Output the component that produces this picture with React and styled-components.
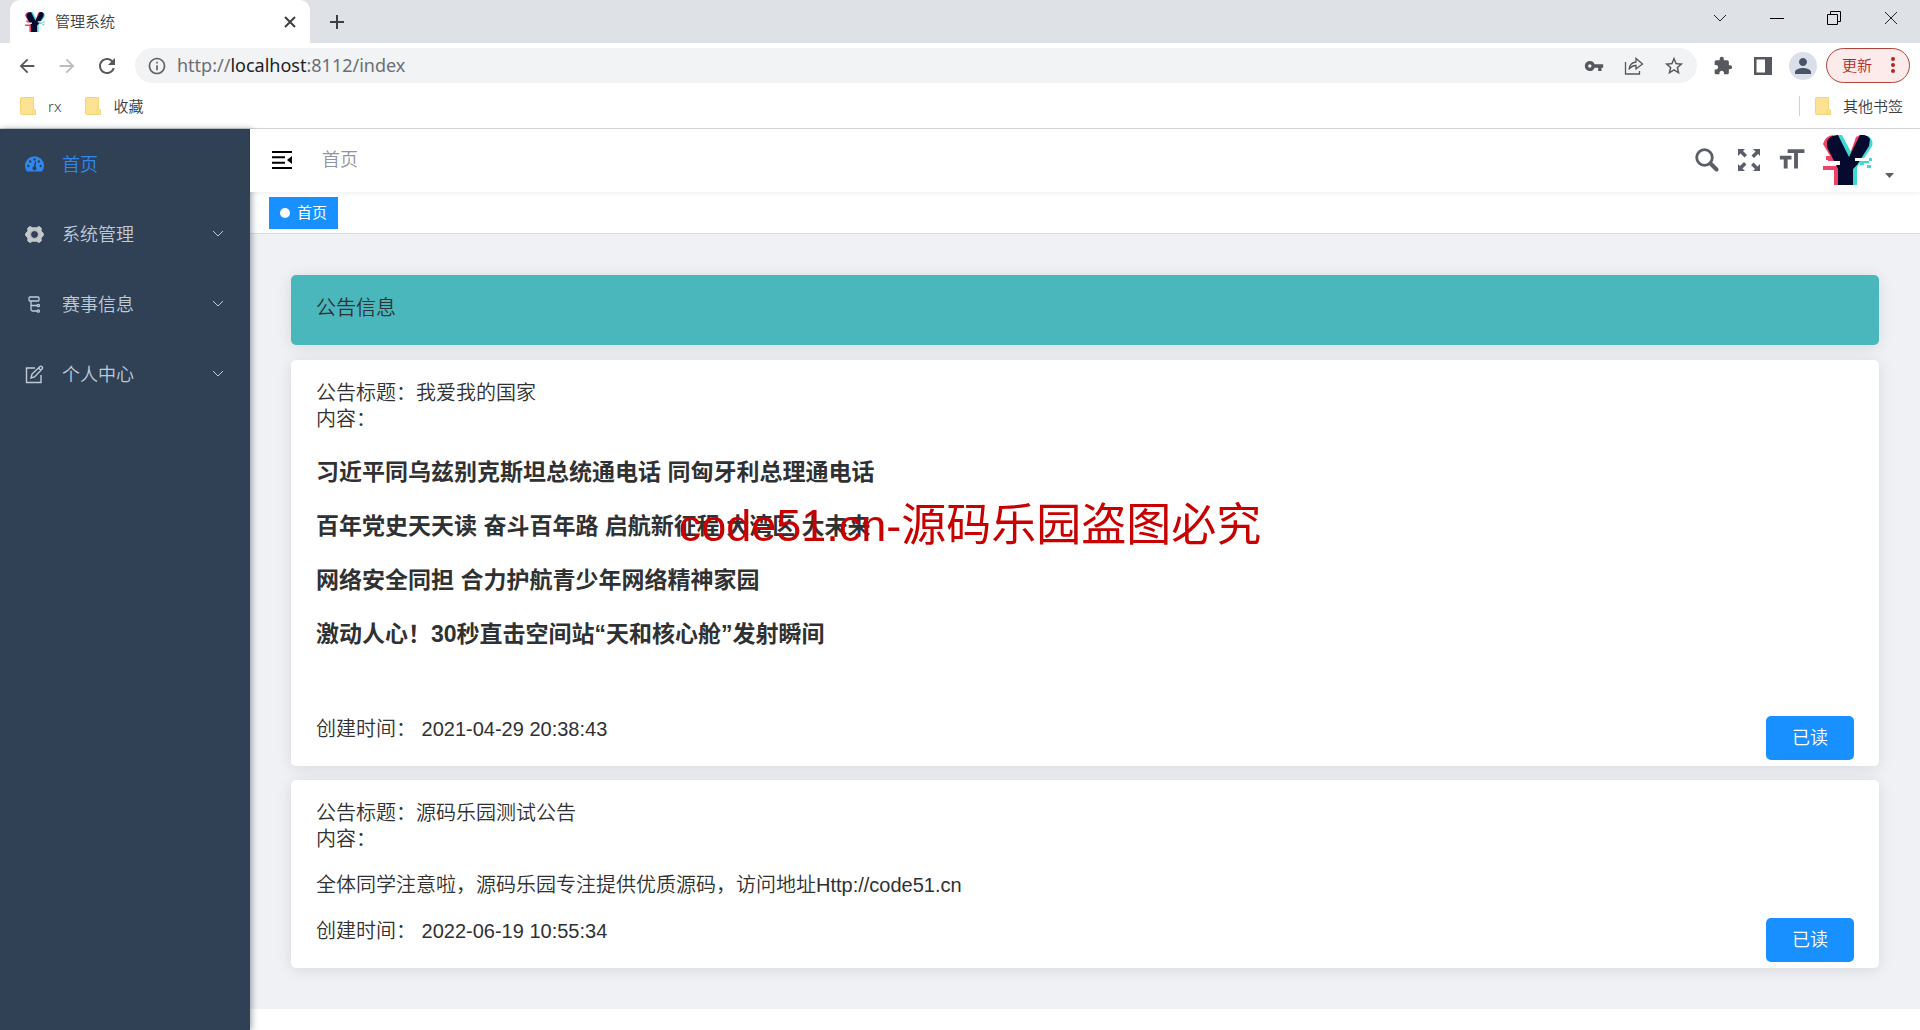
import styled, { createGlobalStyle } from "styled-components";
import {
	MdArrowBack,
	MdArrowForward,
	MdExtension,
	MdFormatSize,
	MdInfoOutline,
	MdPerson,
	MdRefresh,
	MdStarBorder,
	MdVpnKey
} from "react-icons/md";

const GlobalStyle = createGlobalStyle`
	*, *::before, *::after {
		box-sizing: border-box;
	}
	body {
		margin: 0;
		background: #fff;
		color: #303133;
		font-family: "Liberation Sans", "Noto Sans CJK SC", sans-serif;
		font-size: 20px;
		font-weight: 350;
		line-height: 26px;
	}
	button, input {
		font-family: inherit;
		font-weight: inherit;
	}
`;

const Window = styled.div`
	display: flex;
	flex-direction: column;
	min-height: 100vh;
`;

/* ---------- browser frame ---------- */

const TabStrip = styled.header`
	display: flex;
	height: 43px;
	padding-left: 10px;
	background: #dee1e6;
`;

const BrowserTab = styled.div`
	display: flex;
	align-items: center;
	width: 300px;
	padding: 0 12px 0 15px;
	border-radius: 10px 10px 0 0;
	background: #fff;
	color: #3c4043;
	font-size: 15px;

	span {
		flex: 1;
		margin-left: 10px;
	}
`;

const PlainButton = styled.button`
	display: inline-flex;
	align-items: center;
	justify-content: center;
	width: ${(p) => p.$width || 40}px;
	padding: 0;
	border: 0;
	background: none;
	color: ${(p) => p.$color || "#55585c"};
	cursor: pointer;
`;

const WindowButtons = styled.div`
	display: flex;
	height: 36px;
	margin-left: auto;
	padding-right: 1px;
`;

const Toolbar = styled.div`
	display: flex;
	align-items: center;
	height: 45px;
	padding: 0 10px 0 7px;
`;

const AddressBar = styled.form`
	display: flex;
	flex: 1;
	align-items: center;
	height: 35px;
	margin: 0 6px 0 8px;
	padding: 0 3px 0 12px;
	border-radius: 18px;
	background: #f1f3f4;
	color: #5f6368;
`;

const Url = styled.a`
	flex: 1;
	margin-left: 10px;
	padding-bottom: 2px;
	color: #6b6f74;
	font-family: "Noto Sans", "Open Sans", sans-serif;
	font-size: 18px;
	font-weight: 400;
	text-decoration: none;

	b {
		color: #202124;
		font-weight: 400;
	}
`;

const Avatar = styled.button`
	display: flex;
	align-items: center;
	justify-content: center;
	width: 28px;
	height: 28px;
	margin: 0 9px 0 6px;
	padding: 0;
	border: 0;
	border-radius: 50%;
	background: #dbdfea;
	color: #4a5468;
`;

const UpdateButton = styled.button`
	display: flex;
	align-items: center;
	justify-content: space-between;
	width: 84px;
	height: 35px;
	padding: 0 14px 2px 15px;
	border: 1px solid #b3423c;
	border-radius: 18px;
	background: #fcebea;
	color: #b3261e;
	font-size: 15px;
`;

const Bookmarks = styled.nav`
	display: flex;
	align-items: center;
	gap: 24px;
	height: 41px;
	padding: 0 17px 4px 20px;
	border-bottom: 1px solid #d5d7da;
`;

const Bookmark = styled.a`
	display: flex;
	align-items: center;
	gap: 12px;
	color: #3c4043;
	font-family: "Noto Sans", "Noto Sans CJK SC", sans-serif;
	font-size: 15px;
	line-height: 20px;
	text-decoration: none;
`;

const OtherBookmarks = styled.div`
	margin-left: auto;
	padding-left: 15px;
	border-left: 1px solid #cfd1d4;
`;

/* ---------- application ---------- */

const AppBody = styled.div`
	display: flex;
	flex: 1;
`;

const Sidebar = styled.aside`
	z-index: 1;
	width: 250px;
	background: #304156;
	box-shadow: 2px 0 6px rgba(0, 21, 41, 0.35);
`;

const MenuItem = styled.a`
	display: flex;
	align-items: center;
	height: 70px;
	padding: 0 25px;
	color: ${(p) => (p.$active ? "#2f88f0" : "#bfcbd9")};
	font-size: 18px;
	text-decoration: none;

	span {
		flex: 1;
		margin-left: 18px;
		padding-top: 2px;
	}
`;

const Main = styled.div`
	display: flex;
	flex: 1;
	flex-direction: column;
	min-width: 0;
`;

const Navbar = styled.div`
	z-index: 1;
	display: flex;
	align-items: center;
	height: 63px;
	padding: 0 26px 2px 12px;
	background: #fff;
	box-shadow: 0 1px 4px rgba(0, 21, 41, 0.08);
`;

const Breadcrumb = styled.span`
	flex: 1;
	margin-left: 20px;
	color: #8f959e;
	font-size: 18px;
`;

const UserMenu = styled.button`
	display: flex;
	align-items: flex-end;
	gap: 12px;
	margin-left: 11px;
	padding: 0;
	border: 0;
	background: none;
`;

const TagsView = styled.div`
	height: 42px;
	padding: 5px 19px;
	border-bottom: 1px solid #d8dce5;
`;

const Tag = styled.a`
	display: inline-flex;
	align-items: center;
	gap: 7px;
	height: 32px;
	padding: 0 11px;
	background: #1890ff;
	color: #fff;
	font-size: 15px;
	font-weight: 400;
	text-decoration: none;
	vertical-align: top;

	&::before {
		content: "";
		width: 10px;
		height: 10px;
		border-radius: 50%;
		background: #fff;
	}
`;

const Page = styled.main`
	display: flex;
	flex-direction: column;
	padding: 41px;
	background: #eff1f5;
`;

const Card = styled.section`
	margin-bottom: ${(p) => p.$gap || 0}px;
	padding: 20px 25px ${(p) => p.$bottom || 6}px;
	border-radius: 5px;
	background: ${(p) => p.$background || "#fff"};
	box-shadow: 0 2px 15px rgba(0, 0, 0, 0.1);
`;

const Content = styled.div`
	margin: 20px 0;

	h3 {
		margin: 23px 0;
		font-size: 23px;
		line-height: 31px;
	}
	h3:first-child {
		margin-top: 25px;
	}
	p {
		min-height: 23px;
		margin: 20px 0;
	}
`;

const CardFooter = styled.div`
	display: flex;
	align-items: flex-start;
	justify-content: space-between;
`;

const ReadButton = styled.button`
	width: 88px;
	height: 44px;
	padding: 0 0 5px;
	border: 0;
	border-radius: 5px;
	background: #1890ff;
	color: #fff;
	font-size: 18px;
	cursor: pointer;
`;

const Watermark = styled.div`
	position: fixed;
	inset: 0;
	display: flex;
	align-items: center;
	justify-content: center;
	padding: 22px 0 0 20px;
	color: #c80000;
	font-size: 45px;
	font-weight: 400;
	line-height: 60px;
	pointer-events: none;
	z-index: 2;
`;

/* ---------- icons ---------- */

const Logo = ({ size }) => (
	<svg width={size} height={size} viewBox="0 0 50 50" aria-hidden="true">
		<path fill="#ee4266" d="M0 9Q2 1 10 0L17 28H5v-3H3v-4h4zM0 31h15v19h-4V35H0zM26 22L33 2l4-2 4 1-12 22z" />
		<path fill="#3fd8d4" d="M13 0h6l9 17-2 7zM45 1q6 4 4 10l-9 14h5v-2h4v3h-3v2h-9l-3 4v18h-5V27zM44 30h4v3h-4zM37 28h4v2h-4z" />
		<path fill="#060a2e" d="M4 6Q7 0 15 0l11 22L37 0q7-1 10 4l-1 7-12 19-4 4v16H15V34L4 12z" />
		<path fill="#fff" d="M0 26h17v4H0zM32 23h14v3H32z" />
	</svg>
);

const Folder = () => (
	<svg width="16" height="18" viewBox="0 0 16 18" aria-hidden="true">
		<path fill="#fde293" stroke="#f3d478" d="M1.500.5h12v11l2 1.500v4.500h-14a1 1 0 0 1-1-1v-15a1 1 0 0 1 1-1z" />
		<path fill="none" stroke="#f3d478" d="M13.500 11.500c-2 2-2 4 0 6" />
	</svg>
);

const Line = ({ d, width = 14, stroke = 1 }) => (
	<svg width={width} height={width} viewBox="0 0 14 14" fill="none" stroke="currentColor" strokeWidth={stroke} aria-hidden="true">
		<path d={d} />
	</svg>
);

const ShareIcon = () => (
	<svg width="20" height="20" viewBox="0 0 20 20" fill="none" stroke="currentColor" strokeWidth="1.300" aria-hidden="true">
		<path d="M1.500 6v12h14v-3" />
		<path d="M5 13.500C5.500 8.500 8 6.500 12 6V2.500L18.500 8 12 13v-3.500c-3 0-5 1-7 4z" />
	</svg>
);

const PanelIcon = () => (
	<svg width="18" height="18" viewBox="0 0 18 18" aria-hidden="true">
		<path fill="currentColor" fillRule="evenodd" d="M0 0h18v18H0zM2.500 2.500v13H11v-13z" />
	</svg>
);

const HamburgerIcon = () => (
	<svg width="20" height="18" viewBox="0 0 20 18" aria-hidden="true">
		<path d="M0 0h20v2H0zM0 5.300h13v2H0zM0 10.700h13v2H0zM0 16h20v2H0zM20 5v8l-5-4z" />
	</svg>
);

const SearchIcon = () => (
	<svg width="24" height="24" viewBox="0 0 24 24" fill="none" stroke="currentColor" aria-hidden="true">
		<circle cx="9.500" cy="9.500" r="7.800" strokeWidth="2.800" />
		<path d="M15.500 15.500l6 6" strokeWidth="4" strokeLinecap="round" />
	</svg>
);

const FullscreenIcon = () => (
	<svg width="22" height="22" viewBox="0 0 22 22" fill="currentColor" aria-hidden="true">
		{[0, 90, 180, 270].map((angle) => (
			<path key={angle} transform={`rotate(${angle} 11 11)`} d="M0 0h7L5 2l4 4-2.500 2.500-4-4L0 7z" />
		))}
	</svg>
);

const DashboardIcon = () => (
	<svg width="19" height="19" viewBox="0 0 19 19" aria-hidden="true">
		<path fill="currentColor" d="M2 16.500a9.500 9.500 0 1 1 15 0z" />
		<g fill="#304156">
			<circle cx="3.300" cy="11" r="1.200" />
			<circle cx="5.200" cy="6.500" r="1.200" />
			<circle cx="9.500" cy="4.500" r="1.200" />
			<circle cx="13.800" cy="6.500" r="1.200" />
			<circle cx="15.700" cy="11" r="1.200" />
			<path d="M10 6.500l1.200.2-.6 5a2 2 0 1 1-1.800-.2z" />
		</g>
	</svg>
);

const GearIcon = () => (
	<svg width="19" height="19" viewBox="0 0 19 19" aria-hidden="true">
		<path
			fill="#c4c8cc"
			fillRule="evenodd"
			stroke="#c4c8cc"
			strokeLinejoin="round"
			d="M5 1.500l2.500 1.300h4L14 1.500l2.300 1.700-.3 2.800 2.300 2.500v2L16 13l.3 2.800L14 17.500l-2.500-1.300h-4L5 17.500l-2.300-1.700L3 13 .7 10.500v-2L3 6l-.3-2.800zM9.500 5.500a4 4 0 1 0 0 8 4 4 0 0 0 0-8z"
		/>
	</svg>
);

const TreeIcon = () => (
	<svg width="19" height="19" viewBox="0 0 19 19" fill="none" stroke="currentColor" strokeWidth="1.300" aria-hidden="true">
		<rect x="4" y="2" width="10" height="4" rx="1" />
		<path d="M6 6v8.500q0 1.500 1.500 1.500H12M6 10.500h6" />
		<circle cx="13.300" cy="10.500" r="1.200" />
		<circle cx="13.300" cy="16" r="1.200" />
	</svg>
);

const EditIcon = () => (
	<svg width="19" height="19" viewBox="0 0 19 19" fill="none" stroke="currentColor" strokeWidth="1.400" aria-hidden="true">
		<path d="M10 3H1.500v14.500H16V10" />
		<path d="M6 13l1-4 8-7.500q1-.8 2 .2t.2 2L9.500 12zM13.500 3l2.500 2.500" />
	</svg>
);

/* ---------- data ---------- */

const menu = [
	{ label: "首页", Icon: DashboardIcon, active: true },
	{ label: "系统管理", Icon: GearIcon },
	{ label: "赛事信息", Icon: TreeIcon },
	{ label: "个人中心", Icon: EditIcon }
];

const notices = [
	{
		title: "我爱我的国家",
		time: "2021-04-29 20:38:43",
		body: (
			<>
				<h3>习近平同乌兹别克斯坦总统通电话 同匈牙利总理通电话</h3>
				<h3>百年党史天天读 奋斗百年路 启航新征程 大湾区 大未来</h3>
				<h3>网络安全同担 合力护航青少年网络精神家园</h3>
				<h3>激动人心！30秒直击空间站“天和核心舱”发射瞬间</h3>
				<p />
			</>
		)
	},
	{
		title: "源码乐园测试公告",
		time: "2022-06-19 10:55:34",
		body: <p>全体同学注意啦，源码乐园专注提供优质源码，访问地址Http://code51.cn</p>
	}
];

function BrowserFrame() {
	return (
		<>
			<TabStrip>
				<BrowserTab>
					<Logo size={20} />
					<span>管理系统</span>
					<PlainButton $width={16} $color="#3c4043" aria-label="关闭标签页">
						<Line d="M2 2l10 10M12 2L2 12" stroke={2} />
					</PlainButton>
				</BrowserTab>
				<PlainButton $width={54} $color="#3c4043" aria-label="新标签页">
					<Line d="M7 0v14M0 7h14" stroke={2} />
				</PlainButton>
				<WindowButtons>
					<PlainButton $width={57} $color="#222" aria-label="搜索标签页">
						<Line d="M1 4l6 6 6-6" />
					</PlainButton>
					<PlainButton $width={57} $color="#000" aria-label="最小化">
						<Line d="M0 7.500h14" />
					</PlainButton>
					<PlainButton $width={57} $color="#000" aria-label="还原">
						<Line d="M.5 3.500h10v10H.5zM3.500 3V.5h10v10H11" />
					</PlainButton>
					<PlainButton $width={57} $color="#222" aria-label="关闭">
						<Line d="M1 1l12 12M13 1L1 13" />
					</PlainButton>
				</WindowButtons>
			</TabStrip>
			<Toolbar>
				<PlainButton aria-label="后退">
					<MdArrowBack size={22} />
				</PlainButton>
				<PlainButton $color="#b9bbbe" aria-label="前进">
					<MdArrowForward size={22} />
				</PlainButton>
				<PlainButton aria-label="刷新">
					<MdRefresh size={24} />
				</PlainButton>
				<AddressBar>
					<MdInfoOutline size={20} />
					<Url href="#">
						http://<b>localhost</b>:8112/index
					</Url>
					<PlainButton type="button" aria-label="密码">
						<MdVpnKey size={20} />
					</PlainButton>
					<PlainButton type="button" aria-label="分享">
						<ShareIcon />
					</PlainButton>
					<PlainButton type="button" aria-label="收藏此页">
						<MdStarBorder size={22} />
					</PlainButton>
				</AddressBar>
				<PlainButton aria-label="扩展程序">
					<MdExtension size={20} />
				</PlainButton>
				<PlainButton aria-label="侧边栏">
					<PanelIcon />
				</PlainButton>
				<Avatar aria-label="个人资料">
					<MdPerson size={24} />
				</Avatar>
				<UpdateButton>
					更新
					<svg width="4" height="16" viewBox="0 0 4 16" fill="currentColor" aria-hidden="true">
						<circle cx="2" cy="2" r="2" />
						<circle cx="2" cy="8" r="2" />
						<circle cx="2" cy="14" r="2" />
					</svg>
				</UpdateButton>
			</Toolbar>
			<Bookmarks>
				<Bookmark href="#">
					<Folder />
					rx
				</Bookmark>
				<Bookmark href="#">
					<Folder />
					收藏
				</Bookmark>
				<OtherBookmarks>
					<Bookmark href="#">
						<Folder />
						其他书签
					</Bookmark>
				</OtherBookmarks>
			</Bookmarks>
		</>
	);
}

export default function App() {
	return (
		<Window>
			<GlobalStyle />
			<BrowserFrame />
			<AppBody>
				<Sidebar>
					{menu.map(({ label, Icon, active }) => (
						<MenuItem key={label} href="#" $active={active}>
							<Icon />
							<span>{label}</span>
							{!active && <Line d="M2 4l5 5 5-5" />}
						</MenuItem>
					))}
				</Sidebar>
				<Main>
					<Navbar>
						<PlainButton $color="#000" aria-label="折叠菜单">
							<HamburgerIcon />
						</PlainButton>
						<Breadcrumb>首页</Breadcrumb>
						<PlainButton $width={42} $color="#5a5e66" aria-label="搜索">
							<SearchIcon />
						</PlainButton>
						<PlainButton $width={42} $color="#5a5e66" aria-label="全屏">
							<FullscreenIcon />
						</PlainButton>
						<PlainButton $width={42} $color="#5a5e66" aria-label="布局大小">
							<MdFormatSize size={31} />
						</PlainButton>
						<UserMenu aria-label="用户菜单">
							<Logo size={50} />
							<svg width="9" height="14" viewBox="0 0 9 14" aria-hidden="true">
								<path fill="#5a5e66" d="M0 2h9L4.500 7z" />
							</svg>
						</UserMenu>
					</Navbar>
					<TagsView>
						<Tag href="#">首页</Tag>
					</TagsView>
					<Page>
						<Card $gap={15} $bottom={24} $background="#4ab7bd">
							公告信息
						</Card>
						{notices.map((notice, i) => (
							<Card key={notice.title} $gap={i < notices.length - 1 ? 14 : 0}>
								<div>公告标题：{notice.title}</div>
								<div>内容：</div>
								<Content>{notice.body}</Content>
								<CardFooter>
									<span>创建时间： {notice.time}</span>
									<ReadButton>已读</ReadButton>
								</CardFooter>
							</Card>
						))}
					</Page>
				</Main>
			</AppBody>
			<Watermark>code51.cn-源码乐园盗图必究</Watermark>
		</Window>
	);
}
